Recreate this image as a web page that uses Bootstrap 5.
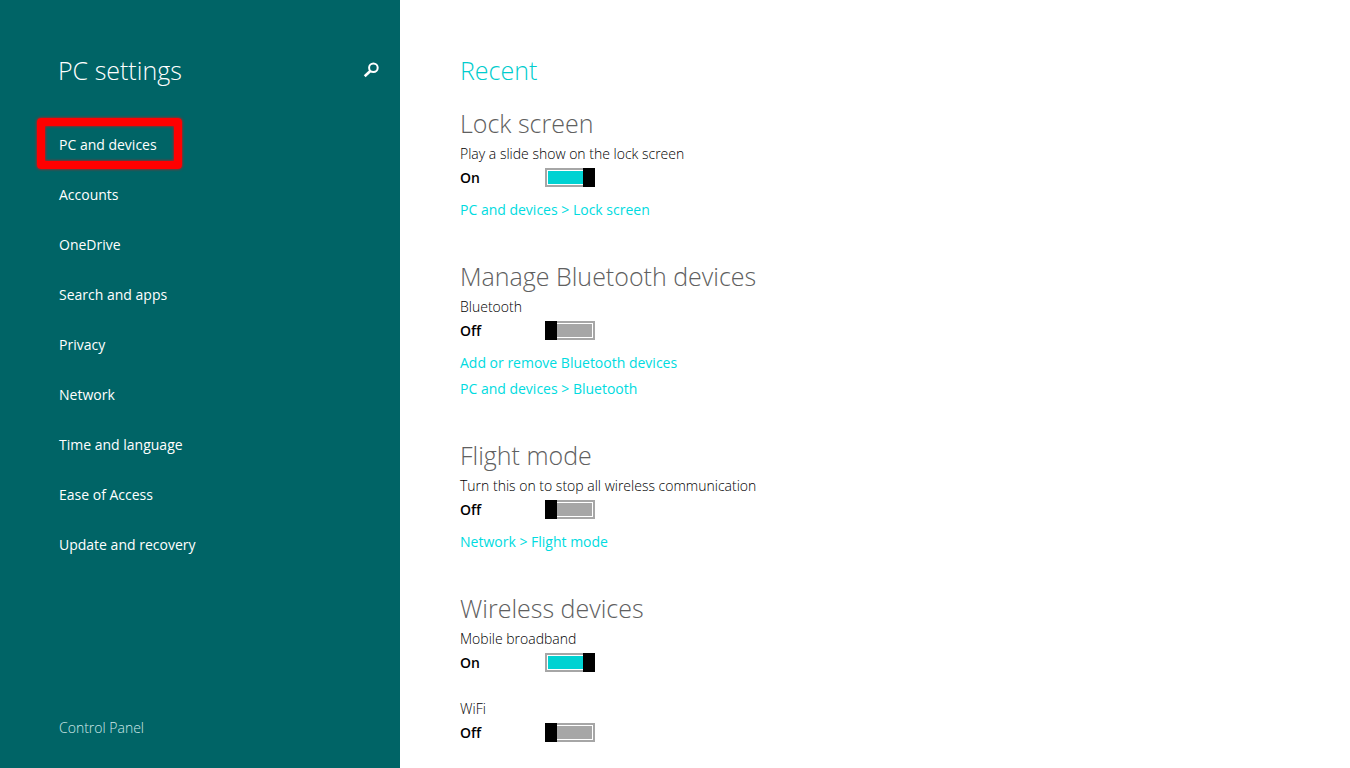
<!DOCTYPE html>
<html lang="en">
<head>
<meta charset="utf-8">
<meta name="viewport" content="width=device-width, initial-scale=1">
<title>PC settings</title>
<link href="https://cdn.jsdelivr.net/npm/bootstrap@5.3.0/dist/css/bootstrap.min.css" rel="stylesheet">
<style>
  body { font: 14px/24px "Open Sans", "Noto Sans", sans-serif; color: #000; background: #fff; }
  h1, h2, h3 { font-size: 25px; line-height: 36px; font-weight: 300; margin: 0; }
  a { text-decoration: none; }
  .sidebar { width: 400px; background: #006466; padding: 52px 20px 28px 36px; }
  .sidebar h1 { color: #fff; }
  .indent { padding-left: 22px; }
  .search-btn { width: 18px; height: 18px; color: #fff; }
  .side-nav { margin-top: 30px; }
  .side-nav .nav-link { color: #fff; padding: 15px 22px 11px 23px; line-height: 24px; }
  .side-nav .nav-link.active { margin: 0 0 -1px 1px; padding: 9px 17px 6px 14px; border: 8px solid #f00; border-radius: 4px; box-shadow: 0 0 3px #f00, inset 0 0 3px #f00; line-height: 20px; }
  .control-link { color: #cfe8e8; font-weight: 300; padding-left: 23px; }
  .content { padding: 52px 60px 24px 60px; }
  .content h2 { color: #00cccd; margin-bottom: 17px; }
  .content h3 { color: #606060; }
  .setting-group { margin-bottom: 35px; }
  .setting-group:last-child { margin-bottom: 0; }
  .setting label { font-weight: 300; padding-top: 1px; line-height: 23px; }
  .setting + .setting { margin-top: 22px; }
  .state { width: 85px; padding-top: 1px; line-height: 23px; font-weight: 600; }
  .links { margin-top: 8px; line-height: 26px; }
  .links a { color: #00dbe0; }
  .toggle { appearance: none; width: 50px; height: 19px; margin: 0; border: 2px solid #a6a6a6; background: #a6a6a6; box-shadow: inset 0 0 0 1px #fff; display: flex; cursor: pointer; }
  .toggle::before { content: ""; width: 12px; height: 19px; margin: -2px; background: #000; }
  .toggle:checked { background: #00d2d2; justify-content: flex-end; }
</style>
</head>
<body>
<div class="d-flex min-vh-100">
  <aside class="sidebar d-flex flex-column flex-shrink-0">
    <header class="indent d-flex align-items-center justify-content-between">
      <h1>PC settings</h1>
      <button type="button" class="search-btn btn p-0 border-0 d-flex" aria-label="Search">
        <svg width="18" height="18" viewBox="0 0 18 18" fill="none" stroke="currentColor" aria-hidden="true"><circle cx="11.4" cy="6.8" r="4.3" stroke-width="2"/><path d="M8.3 10 2.7 15.2" stroke-width="2.6"/></svg>
      </button>
    </header>
    <nav class="side-nav nav flex-column align-items-start" aria-label="Settings">
      <a class="nav-link active" aria-current="page" href="#">PC and devices</a>
      <a class="nav-link" href="#">Accounts</a>
      <a class="nav-link" href="#">OneDrive</a>
      <a class="nav-link" href="#">Search and apps</a>
      <a class="nav-link" href="#">Privacy</a>
      <a class="nav-link" href="#">Network</a>
      <a class="nav-link" href="#">Time and language</a>
      <a class="nav-link" href="#">Ease of Access</a>
      <a class="nav-link" href="#">Update and recovery</a>
    </nav>
    <a class="control-link mt-auto" href="#">Control Panel</a>
  </aside>
  <main class="content flex-grow-1">
    <h2>Recent</h2>
    <section class="setting-group">
      <h3>Lock screen</h3>
      <div class="setting">
        <label class="d-block" for="slideshow">Play a slide show on the lock screen</label>
        <div class="d-flex align-items-center"><span class="state">On</span><input class="toggle" type="checkbox" role="switch" id="slideshow" checked></div>
      </div>
      <div class="links d-flex flex-column align-items-start"><a href="#">PC and devices &gt; Lock screen</a></div>
    </section>
    <section class="setting-group">
      <h3>Manage Bluetooth devices</h3>
      <div class="setting">
        <label class="d-block" for="bluetooth">Bluetooth</label>
        <div class="d-flex align-items-center"><span class="state">Off</span><input class="toggle" type="checkbox" role="switch" id="bluetooth"></div>
      </div>
      <div class="links d-flex flex-column align-items-start"><a href="#">Add or remove Bluetooth devices</a><a href="#">PC and devices &gt; Bluetooth</a></div>
    </section>
    <section class="setting-group">
      <h3>Flight mode</h3>
      <div class="setting">
        <label class="d-block" for="flight">Turn this on to stop all wireless communication</label>
        <div class="d-flex align-items-center"><span class="state">Off</span><input class="toggle" type="checkbox" role="switch" id="flight"></div>
      </div>
      <div class="links d-flex flex-column align-items-start"><a href="#">Network &gt; Flight mode</a></div>
    </section>
    <section class="setting-group">
      <h3>Wireless devices</h3>
      <div class="setting">
        <label class="d-block" for="broadband">Mobile broadband</label>
        <div class="d-flex align-items-center"><span class="state">On</span><input class="toggle" type="checkbox" role="switch" id="broadband" checked></div>
      </div>
      <div class="setting">
        <label class="d-block" for="wifi">WiFi</label>
        <div class="d-flex align-items-center"><span class="state">Off</span><input class="toggle" type="checkbox" role="switch" id="wifi"></div>
      </div>
    </section>
  </main>
</div>
<script src="https://cdn.jsdelivr.net/npm/bootstrap@5.3.0/dist/js/bootstrap.bundle.min.js"></script>
</body>
</html>
